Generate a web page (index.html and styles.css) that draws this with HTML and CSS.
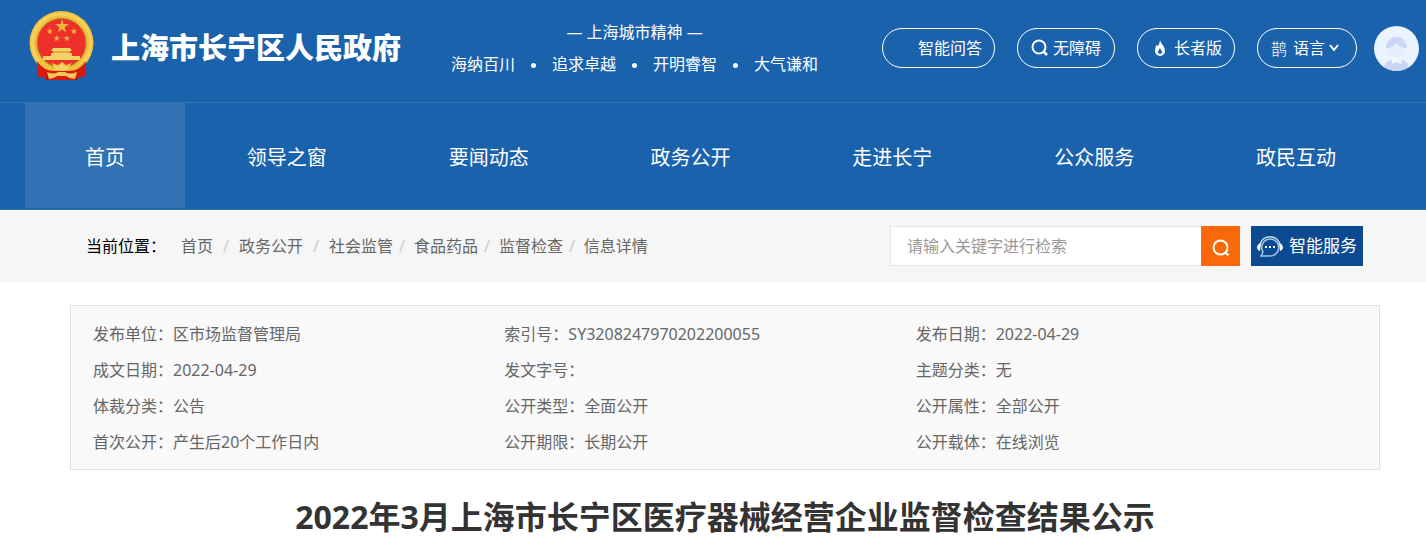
FILE: index.html
```html
<!DOCTYPE html>
<html lang="zh-CN">
  <head>
    <meta charset="utf-8">
    <title>2022年3月上海市长宁区医疗器械经营企业监督检查结果公示</title>
    <link rel="stylesheet" href="styles.css">
  </head>
  <body>
    <header class="header">
      <div class="top">
        <svg class="emblem" viewBox="0 0 65 70" aria-hidden="true">
          <path d="M9 49 L8 66 Q14 65 18 69 H47 Q51 65 57 66 L56 49 Z" fill="#d9190f"/>
          <path d="M9 52 Q14 60 20 62 L18 69 M56 52 Q51 60 45 62 L47 69" fill="none" stroke="#a50f0c" stroke-width="2"/>
          <circle cx="32.500" cy="32" r="32" fill="#eebf3c"/>
          <circle cx="32.500" cy="32" r="29" fill="none" stroke="#f6d25c" stroke-width="3"/>
          <circle cx="32.500" cy="32" r="24.500" fill="#ee2f2a" stroke="#b98428"/>
          <path id="star" d="M33 8 L34.500 13 H40 L35.600 16.300 L37.300 21.500 L33 18.300 L28.700 21.500 L30.400 16.300 L26 13 H31.500 Z" fill="#e9b93a"/>
          <use href="#star" transform="translate(5 13) scale(.48)"/>
          <use href="#star" transform="translate(29 13) scale(.48)"/>
          <use href="#star" transform="translate(12 20) scale(.48)"/>
          <use href="#star" transform="translate(22 20) scale(.48)"/>
          <path d="M22 40 L24 37 H41 L43 40 H41 V42 H43 V45 H51 V49 H14 V45 H22 V42 H24 V40 Z" fill="#f5d264"/>
          <path d="M24 41 H41" stroke="#c7862a"/>
          <path d="M10 49 Q16 58 27 58 L22 52 L29 54 L33 51 L37 54 L43 52 L38 58 Q49 58 55 49 L56 55 Q49 62 38 61 H27 Q16 62 9 55 Z" fill="#eebf3c"/>
          <path d="M8 50 Q14 60 26 60 H39 Q51 60 57 50 L56 60 Q48 66 38 63 H27 Q17 66 9 60 Z" fill="#d9190f"/>
          <path d="M24 53 L29 56 L33 52 L37 56 L42 53 L39 58 L33 60 L26 58 Z" fill="#f5d264"/>
          <path d="M18 61 Q25 64 29 61 H36 Q40 64 48 61 L46 68 Q41 68 37 65 H28 Q24 68 20 68 Z" fill="#efcb55"/>
        </svg>
        <div class="site-name">上海市长宁区人民政府</div>
        <div class="slogan">
          <p>— 上海城市精神 —</p>
          <ul>
            <li>海纳百川</li>
            <li>追求卓越</li>
            <li>开明睿智</li>
            <li>大气谦和</li>
          </ul>
        </div>
        <div class="tools">
          <button class="pill pill-ask" type="button">智能问答</button>
          <button class="pill" type="button">
            <svg width="18" height="18" viewBox="0 0 18 18" aria-hidden="true"><circle cx="8" cy="8" r="6.500" fill="none" stroke="#fff" stroke-width="2"/><path d="M13 13 L16 16" stroke="#fff" stroke-width="2.500"/></svg>
            无障碍
          </button>
          <button class="pill pill-elder" type="button">
            <svg width="12" height="17" viewBox="0 0 12 17" aria-hidden="true"><path d="M6 0 C7 4 11 6 11 11 A5 5 0 0 1 1 11 C1 8 2 7 2 5 L4 6 C5 4 6 2 6 0 Z M6 8 C5 10 4 10.500 4 12 A2 2 0 0 0 8 12 C8 10.500 6.500 10 6 8 Z" fill="#fff" fill-rule="evenodd"/></svg>
            长者版
          </button>
          <button class="pill pill-lang" type="button">
            <span class="lang-mark">鹊</span>
            语言
            <svg width="10" height="8" viewBox="0 0 10 8" aria-hidden="true"><path d="M1 1 L5 6 L9 1" fill="none" stroke="#fff" stroke-width="2"/></svg>
          </button>
          <svg class="avatar" viewBox="0 0 45 45" aria-hidden="true">
            <clipPath id="round"><circle cx="22.500" cy="22.500" r="22.500"/></clipPath>
            <g clip-path="url(#round)">
              <rect width="45" height="45" fill="#e9f4fe"/>
              <path d="M9 45 Q10 35 18 33 H27 Q35 35 36 45 Z" fill="#cbd6f7"/>
              <path d="M17 31 L18 38 L22.500 36 L27 38 L28 31 Z" fill="#f1f8ff"/>
              <circle cx="22.500" cy="23" r="9.500" fill="#e6effd"/>
              <path d="M12 22 A10.500 11 0 0 1 33 22 Q26 22 22.500 17 Q19 22 12 22 Z" fill="#cbd6f7"/>
            </g>
          </svg>
        </div>
      </div>
      <nav class="nav">
        <a class="active" href="#">首页</a>
        <a href="#">领导之窗</a>
        <a href="#">要闻动态</a>
        <a href="#">政务公开</a>
        <a href="#">走进长宁</a>
        <a href="#">公众服务</a>
        <a href="#">政民互动</a>
      </nav>
    </header>

    <div class="location">
      <span class="here">当前位置：</span>
      <div class="crumbs">
        <a class="wide" href="#">首页</a>
        <a class="wide" href="#">政务公开</a>
        <a href="#">社会监管</a>
        <a href="#">食品药品</a>
        <a href="#">监督检查</a>
        <a href="#">信息详情</a>
      </div>
      <form class="search">
        <input type="text" placeholder="请输入关键字进行检索" aria-label="请输入关键字进行检索">
        <button type="button" aria-label="检索">
          <svg width="18" height="18" viewBox="0 0 18 18" aria-hidden="true"><circle cx="8.500" cy="8.500" r="7" fill="none" stroke="#fff" stroke-width="2"/><path d="M13 13 L16.500 16.500" stroke="#fff" stroke-width="2"/></svg>
        </button>
      </form>
      <a class="service" href="#">
        <svg width="26" height="24" viewBox="0 0 26 24" aria-hidden="true">
          <path d="M3 10 A10.500 10.500 0 0 1 23 10" fill="none" stroke="#c6d8ec" stroke-width="1.500"/>
          <path d="M4 9 Q0 10 0 14 Q1 17 3 17 Z M22 9 Q26 10 26 14 Q25 17 23 17 Z" fill="#fff"/>
          <path d="M4 22 L6 18 A8.500 8.500 0 1 1 13 22 Z" fill="none" stroke="#a9c4e2" stroke-width="1.500"/>
          <path d="M8 13 h2 M12 13 h2 M16 13 h2" stroke="#fff" stroke-width="2"/>
        </svg>
        智能服务
      </a>
    </div>

    <main class="main">
      <dl class="info">
        <div><dt>发布单位：</dt><dd>区市场监督管理局</dd></div>
        <div><dt>索引号：</dt><dd>SY3208247970202200055</dd></div>
        <div><dt>发布日期：</dt><dd>2022-04-29</dd></div>
        <div><dt>成文日期：</dt><dd>2022-04-29</dd></div>
        <div><dt>发文字号：</dt><dd></dd></div>
        <div><dt>主题分类：</dt><dd>无</dd></div>
        <div><dt>体裁分类：</dt><dd>公告</dd></div>
        <div><dt>公开类型：</dt><dd>全面公开</dd></div>
        <div><dt>公开属性：</dt><dd>全部公开</dd></div>
        <div><dt>首次公开：</dt><dd>产生后20个工作日内</dd></div>
        <div><dt>公开期限：</dt><dd>长期公开</dd></div>
        <div><dt>公开载体：</dt><dd>在线浏览</dd></div>
      </dl>
      <h1>2022年3月上海市长宁区医疗器械经营企业监督检查结果公示</h1>
    </main>
  </body>
</html>
```
FILE: styles.css
```css
* {
  box-sizing: border-box;
}

body {
  margin: 0;
  background: #fff;
  color: #666;
  font-family: "Noto Sans", "Noto Sans CJK SC", sans-serif;
  font-size: 16px;
  line-height: 24px;
}

a {
  color: inherit;
  text-decoration: none;
}

button,
input {
  font: inherit;
}

p, ul, dl, dd, h1 {
  margin: 0;
  padding: 0;
}

.header {
  background: #1b62ad;
  color: #fff;
  border-bottom: 1px solid #3271b4;
}

.top {
  display: flex;
  align-items: center;
  padding: 11px 7px 21px 29px;
}

.emblem {
  width: 65px;
  height: 70px;
}

.site-name {
  margin-left: 17px;
  padding-top: 4px;
  font-size: 29px;
  font-weight: 900;
  line-height: 40px;
  white-space: nowrap;
}

.slogan {
  margin-left: 50px;
  padding-top: 4px;
  line-height: 32px;
  text-align: center;
  white-space: nowrap;
}

.slogan ul {
  display: flex;
  list-style: none;
}

.slogan li + li::before {
  content: "";
  display: inline-block;
  width: 5px;
  height: 5px;
  margin: 0 16px;
  border-radius: 50%;
  background: #fff;
  vertical-align: middle;
}

.tools {
  display: flex;
  align-items: center;
  gap: 22px;
  margin-left: auto;
  padding-top: 4px;
}

.pill {
  display: flex;
  align-items: center;
  gap: 4px;
  height: 40px;
  padding: 0 13px;
  border: 1px solid #fff;
  border-radius: 20px;
  background: transparent;
  color: #fff;
  white-space: nowrap;
}

.pill-ask {
  padding: 0 12px 0 35px;
}

.pill-elder {
  gap: 8px;
  padding: 0 12px 0 16px;
}

.pill-lang {
  padding: 0 17px 0 13px;
}

.lang-mark {
  margin-right: 2px;
  font-family: "Noto Sans CJK SC", sans-serif;
  font-weight: 300;
}

.avatar {
  width: 45px;
  height: 45px;
  margin-left: -5px;
}

.nav {
  display: flex;
  justify-content: space-between;
  padding: 0 30px 1px 25px;
  border-top: 1px solid #3271b4;
  font-size: 20px;
}

.nav a {
  padding: 4px 60px 0;
  line-height: 101px;
  white-space: nowrap;
}

.nav .active {
  background: #3271b4;
}

.location {
  display: flex;
  align-items: center;
  padding: 16px 63px 16px 86px;
  background: #f6f6f6;
}

.here {
  color: #000;
}

.crumbs {
  display: flex;
  margin-left: 15px;
}

.crumbs a + a::before {
  content: "/";
  margin: 0 9px 0 6px;
  color: #ccc;
}

.crumbs .wide + a::before {
  margin: 0 10px;
}

.search {
  display: flex;
  margin-left: auto;
}

.search input {
  width: 311px;
  height: 40px;
  padding: 0 16px;
  border: 1px solid #e6e6e6;
  border-right: 0;
  background: #fff;
}

.search input::placeholder {
  color: #999;
}

.search button {
  display: flex;
  align-items: center;
  justify-content: center;
  width: 39px;
  height: 40px;
  padding: 4px 0 0;
  border: 0;
  background: #fb6809;
}

.service {
  display: flex;
  align-items: center;
  gap: 6px;
  height: 40px;
  margin-left: 11px;
  padding: 0 6px;
  background: #0b4a91;
  color: #fff;
  font-size: 17px;
}

.main {
  margin: 23px 46px 0 70px;
}

.info {
  display: grid;
  grid-template-columns: repeat(3, 1fr);
  padding: 10px 52px 9px 22px;
  border: 1px solid #e1e1e1;
  background: #f9f9f9;
}

.info div {
  display: flex;
  line-height: 36px;
}

h1 {
  margin-top: 23px;
  color: #333;
  font-size: 32px;
  line-height: 48px;
  text-align: center;
}
```
